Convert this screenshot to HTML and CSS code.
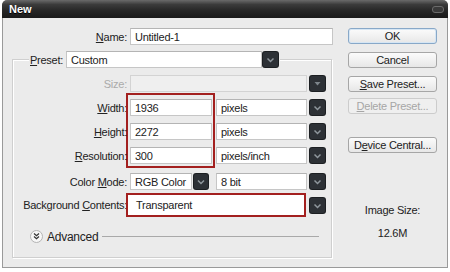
FILE: index.html
```html
<!DOCTYPE html>
<html lang="en">
<head>
    <meta charset="UTF-8">
    <title>New</title>
    <link rel="stylesheet" href="styles.css">
</head>
<body>
    <div class="dialog">
        <div class="titlebar">
            <span class="title">New</span>
            <span class="close"></span>
        </div>
        <div class="content">
            <div class="main">
                <div class="name-row">
                    <span class="label"><span><u>N</u>ame:</span></span>
                    <span class="field name-field">Untitled-1</span>
                </div>
                <fieldset class="group">
                    <legend class="preset">
                        <span class="preset-label"><u>P</u>reset:</span>
                        <span class="field preset-field">Custom</span>
                        <span class="arrow"><svg width="15" height="15" viewBox="0 0 15 15"><path d="M4.5 6.5l3 3 3-3" fill="none" stroke="#8f979d" stroke-width="1.5"/></svg></span>
                    </legend>

                    <div class="form">
                        <span class="label disabled"><span>Size:</span></span>
                        <div class="select span">
                            <span class="field off"></span>
                            <span class="arrow"><svg width="15" height="15" viewBox="0 0 15 15"><path d="M4.5 6h6l-3 3.5z" fill="#7d858b"/></svg></span>
                        </div>

                        <span class="label"><span><u>W</u>idth:</span></span>
                        <div class="dims">
                            <span class="field">1936</span>
                            <span class="field">2272</span>
                            <span class="field">300</span>
                        </div>
                        <div class="select unit">
                            <span class="field">pixels</span>
                            <span class="arrow"><svg width="15" height="15" viewBox="0 0 15 15"><path d="M4.5 6.5l3 3 3-3" fill="none" stroke="#8f979d" stroke-width="1.5"/></svg></span>
                        </div>

                        <span class="label"><span><u>H</u>eight:</span></span>
                        <div class="select unit">
                            <span class="field">pixels</span>
                            <span class="arrow"><svg width="15" height="15" viewBox="0 0 15 15"><path d="M4.5 6.5l3 3 3-3" fill="none" stroke="#8f979d" stroke-width="1.5"/></svg></span>
                        </div>

                        <span class="label"><span><u>R</u>esolution:</span></span>
                        <div class="select unit">
                            <span class="field">pixels/inch</span>
                            <span class="arrow"><svg width="15" height="15" viewBox="0 0 15 15"><path d="M4.5 6.5l3 3 3-3" fill="none" stroke="#8f979d" stroke-width="1.5"/></svg></span>
                        </div>

                        <span class="label r5"><span>Color <u>M</u>ode:</span></span>
                        <div class="select mode r5">
                            <span class="field">RGB Color</span>
                            <span class="arrow"><svg width="14" height="15" viewBox="0 0 14 15"><path d="M4 6.5l3 3 3-3" fill="none" stroke="#8f979d" stroke-width="1.5"/></svg></span>
                        </div>
                        <div class="select unit r5">
                            <span class="field">8 bit</span>
                            <span class="arrow"><svg width="15" height="15" viewBox="0 0 15 15"><path d="M4.5 6.5l3 3 3-3" fill="none" stroke="#8f979d" stroke-width="1.5"/></svg></span>
                        </div>

                        <span class="label r6"><span>Background <u>C</u>ontents:</span></span>
                        <div class="select span bg r6">
                            <span class="field marked">Transparent</span>
                            <span class="arrow"><svg width="15" height="15" viewBox="0 0 15 15"><path d="M4.5 6.5l3 3 3-3" fill="none" stroke="#8f979d" stroke-width="1.5"/></svg></span>
                        </div>
                    </div>

                    <div class="advanced">
                        <span class="toggle"><svg width="11" height="11" viewBox="0 0 11 11"><path d="M3 2.5l2.5 2.3 2.5-2.3M3 5.5l2.5 2.3 2.5-2.3" fill="none" stroke="#333" stroke-width="1.2"/></svg></span>
                        <span class="adv-text">Advanced</span>
                        <span class="rule"></span>
                    </div>
                </fieldset>
            </div>

            <div class="side">
                <div class="button default">OK</div>
                <div class="button">Cancel</div>
                <div class="button"><u>S</u>ave Preset...</div>
                <div class="button disabled"><u>D</u>elete Preset...</div>
                <div class="button device">D<u>e</u>vice Central...</div>
                <div class="image-size">
                    <div>Image Size:</div>
                    <div class="size-value">12.6M</div>
                </div>
            </div>
        </div>
    </div>
</body>
</html>
```

FILE: styles.css
```css
* {
    box-sizing: border-box;
}
body {
    margin: 0;
    background: #ffffff;
    font-family: "Liberation Sans", Arial, sans-serif;
    font-size: 11px;
    letter-spacing: -0.25px;
    color: #222222;
}
.dialog {
    margin-left: 2px;
    width: 446px;
    height: 268px;
    background: #ebebeb;
    border: 1px solid #9a9a9a;
    border-top: none;
    border-radius: 6px 6px 0 0;
    display: flex;
    flex-direction: column;
}
.titlebar {
    height: 18px;
    margin: 0 -1px;
    display: flex;
    align-items: center;
    padding: 0 4px 0 7px;
    border-radius: 5px 5px 0 0;
    background: linear-gradient(#6a6a6a 0%, #3b3b3b 25%, #262626 60%, #1a1a1a 100%);
}
.title {
    color: #ffffff;
    font-weight: bold;
    letter-spacing: 0;
    text-shadow: 0 1px 0 #000;
}
.close {
    margin-left: auto;
    width: 12px;
    height: 7px;
    border-radius: 3px;
    background: #3a3a3a;
    border: 1px solid #6b6b6b;
}
.content {
    display: flex;
    padding: 10px 0 0 9px;
}
.main {
    width: 321px;
}
.name-row {
    display: flex;
    align-items: center;
    gap: 3px;
    height: 17px;
}
.label {
    display: flex;
    align-items: center;
    justify-content: flex-end;
    white-space: nowrap;
}
.name-row .label {
    width: 115px;
}
.field {
    display: flex;
    align-items: center;
    height: 17px;
    padding-left: 4px;
    background: #ffffff;
    border: 1px solid #c6c6c6;
    border-top-color: #b4b4b4;
    white-space: nowrap;
}
.name-field {
    width: 203px;
}
.arrow {
    display: block;
    width: 15px;
    height: 15px;
    flex: none;
    border-radius: 2px;
    background: #2d3136;
    box-shadow: 0 0 0 1px #1c1f22;
}
.arrow svg {
    display: block;
}
.group {
    margin: 6px 0 0 0;
    padding: 7px 0 14px 0;
    width: 320px;
    min-width: 0;
    border: 1px solid #cfcfcf;
    box-shadow: inset 1px 1px 0 #ffffff, 1px 1px 0 #ffffff;
}
.preset {
    display: flex;
    align-items: center;
    margin-left: 16px;
    padding: 0 2px 0 1px;
    height: 17px;
    background: #ebebeb;
}
.preset-label {
    width: 35px;
    margin-right: 1px;
}
.preset-field {
    width: 196px;
    margin-right: 1px;
}
.form {
    display: grid;
    grid-template-columns: 114px 82px 110px;
    grid-template-rows: repeat(4, 17px) 19px 20px;
    column-gap: 3px;
    row-gap: 7px;
}
.r5 {
    margin-top: 2px;
}
.r6 {
    margin-top: -4px;
}
.disabled {
    color: #aaaaaa;
}
.select {
    display: flex;
    align-items: center;
}
.select .field {
    flex: 1;
}
.select .arrow {
    margin-left: 3px;
}
.span {
    grid-column: 2 / 4;
}
.field.off {
    background: #efefef;
    border-color: #d3d3d3;
}
.unit .field {
    margin-left: 1px;
}
.mode {
    width: 78px;
}
.mode .arrow {
    width: 14px;
    margin-left: 2px;
}
.dims {
    grid-column: 2;
    grid-row: 2 / 5;
    display: flex;
    flex-direction: column;
    justify-content: space-between;
    margin: -6px -3px -4px -4px;
    padding: 4px 1px 2px 2px;
    border: 2px solid #a3201f;
}
.bg {
    margin-left: -4px;
}
.bg .arrow {
    margin-left: 4px;
}
.field.marked {
    height: 24px;
    padding-left: 8px;
    border: 2px solid #a3201f;
}
.advanced {
    display: flex;
    align-items: center;
    height: 13px;
    margin: 13px 12px 0 17px;
}
.toggle {
    width: 13px;
    height: 13px;
    border-radius: 50%;
    border: 1px solid #b4b4b4;
    background: #f7f7f7;
    display: flex;
    align-items: center;
    justify-content: center;
}
.adv-text {
    margin-left: 4px;
    font-size: 12px;
}
.rule {
    flex: 1;
    height: 1px;
    margin-left: 4px;
    background: #a9a9a9;
}
.side {
    width: 89px;
    margin-left: 15px;
    display: flex;
    flex-direction: column;
}
.button {
    height: 16px;
    line-height: 14px;
    text-align: center;
    border: 1px solid #a6a6a6;
    border-radius: 3px;
    background: linear-gradient(#fbfbfb, #e7e7e7);
    margin-bottom: 8px;
}
.button.default {
    border-color: #88a8c8;
    box-shadow: inset 0 0 0 1px #d6e6f4;
}
.button.disabled {
    border-color: #cccccc;
    color: #a6a6a6;
    background: #efefef;
}
.side .button:nth-child(3) {
    margin-bottom: 6px;
}
.side .button:nth-child(4) {
    margin-bottom: 23px;
}
.image-size {
    margin-top: 43px;
    text-align: center;
    line-height: 13px;
}
.size-value {
    margin-top: 10px;
}
```
